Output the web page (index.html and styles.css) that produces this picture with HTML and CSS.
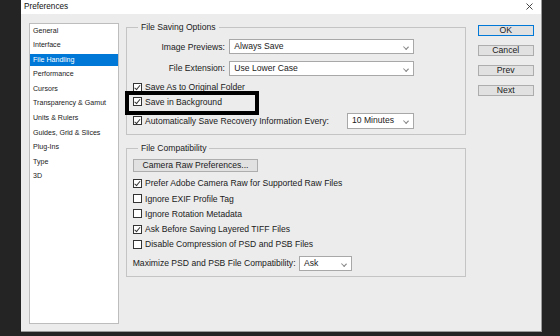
FILE: index.html
```html
<!DOCTYPE html>
<html lang="en">
<head>
  <meta charset="UTF-8" />
  <title>Preferences</title>
  <link rel="stylesheet" href="styles.css">
</head>
<body>
  <div class="dialog">
    <div class="titlebar">
      <span>Preferences</span>
      <svg class="close" width="7" height="7" viewBox="0 0 7 7"><path d="M0.5 0.5 L6.5 6.5 M6.5 0.5 L0.5 6.5" stroke="#333" stroke-width="0.9" fill="none"/></svg>
    </div>

    <div class="content">
      <ul class="nav">
        <li>General</li>
        <li>Interface</li>
        <li class="active">File Handling</li>
        <li>Performance</li>
        <li>Cursors</li>
        <li>Transparency &amp; Gamut</li>
        <li>Units &amp; Rulers</li>
        <li>Guides, Grid &amp; Slices</li>
        <li>Plug-Ins</li>
        <li>Type</li>
        <li>3D</li>
      </ul>

      <div class="panel">
        <fieldset class="group saving">
          <legend>File Saving Options</legend>
          <div class="field first">
            <label>Image Previews:</label>
            <div class="select wide">Always Save<span class="caret"></span></div>
          </div>
          <div class="field">
            <label>File Extension:</label>
            <div class="select wide">Use Lower Case<span class="caret"></span></div>
          </div>
          <div class="check first"><span class="box on"></span>Save As to Original Folder</div>
          <div class="check marked"><span class="box on"></span>Save in Background</div>
          <div class="check auto"><span class="box on"></span>Automatically Save Recovery Information Every:
            <div class="select mins">10 Minutes<span class="caret"></span></div>
          </div>
        </fieldset>

        <fieldset class="group compat">
          <legend>File Compatibility</legend>
          <button class="btn raw">Camera Raw Preferences...</button>
          <div class="check first"><span class="box on"></span>Prefer Adobe Camera Raw for Supported Raw Files</div>
          <div class="check"><span class="box"></span>Ignore EXIF Profile Tag</div>
          <div class="check"><span class="box"></span>Ignore Rotation Metadata</div>
          <div class="check"><span class="box on"></span>Ask Before Saving Layered TIFF Files</div>
          <div class="check"><span class="box"></span>Disable Compression of PSD and PSB Files</div>
          <div class="maximize">
            <label>Maximize PSD and PSB File Compatibility:</label>
            <div class="select ask">Ask<span class="caret"></span></div>
          </div>
        </fieldset>
      </div>

      <div class="actions">
        <button class="btn side default">OK</button>
        <button class="btn side">Cancel</button>
        <button class="btn side">Prev</button>
        <button class="btn side">Next</button>
      </div>
    </div>
  </div>
</body>
</html>
```

FILE: styles.css
```css
body {
  margin: 0;
  background-color: #242424;
  font-family: 'Liberation Sans', Arial, sans-serif;
  color: #1a1a1a;
  width: 560px;
  height: 336px;
  overflow: hidden;
}

.dialog {
  margin-left: 21px;
  width: 521px;
  height: 332px;
  box-sizing: border-box;
  background-color: #ececec;
  border-right: 1px solid #9a9a9a;
  border-bottom: 1px solid #9a9a9a;
}

.titlebar {
  height: 14px;
  background-color: #fff;
  display: flex;
  align-items: center;
  justify-content: space-between;
  padding: 0 8px 1px 3px;
  box-sizing: border-box;
  font-size: 8.2px;
  color: #111;
}

.content {
  display: flex;
  align-items: flex-start;
  padding: 9px 0 0 8px;
}

/* left category list */
.nav {
  list-style: none;
  margin: 0;
  padding: 0.8px 0 0;
  width: 90px;
  height: 301px;
  box-sizing: border-box;
  background-color: #fff;
  border: 1px solid #bdbdbd;
  font-size: 7.1px;
}

.nav li {
  height: 11.6px;
  line-height: 11.6px;
  padding-top: 0.8px;
  margin-bottom: 2.2px;
  padding-left: 3px;
  white-space: nowrap;
}

.nav li.active {
  background-color: #0078d7;
  color: #fff;
}

/* middle panel */
.panel {
  width: 340px;
  margin-left: 7px;
  font-size: 8.6px;
}

.group {
  margin: 0;
  padding: 0;
  min-width: 0;
  border: 1px solid #c4c4c4;
  box-sizing: border-box;
  width: 340px;
}

.group legend {
  margin-left: 11px;
  padding: 0 3px;
  height: 9px;
  line-height: 9px;
}

.saving {
  padding-bottom: 5.3px;
}

.compat {
  margin-top: 8.8px;
  padding-bottom: 5.3px;
}

.field {
  display: flex;
  align-items: center;
  height: 15.3px;
  margin-top: 6.4px;
}

.field.first {
  margin-top: 7px;
}

.field label {
  width: 98px;
  text-align: right;
  margin-right: 4.3px;
}

.select {
  position: relative;
  height: 15.3px;
  line-height: 13.3px;
  box-sizing: border-box;
  background-color: #fff;
  border: 1px solid #a8a8a8;
  padding-left: 4px;
}

.select.wide {
  width: 185px;
}

.select.mins {
  width: 67px;
  margin-left: auto;
  margin-right: 51px;
  height: 15.4px;
}

.select.ask {
  width: 53px;
}

.caret {
  position: absolute;
  right: 5px;
  top: 5px;
  width: 3px;
  height: 3px;
  border-right: 1px solid #8a8a8a;
  border-bottom: 1px solid #8a8a8a;
  transform: rotate(45deg) scaleX(1.1);
}

.check {
  display: flex;
  align-items: center;
  height: 15.3px;
  padding-left: 6px;
  white-space: nowrap;
}

.saving .check {
  height: 14.4px;
}

.saving .check.first {
  margin-top: 4.1px;
}

.saving .check.auto {
  height: 15.4px;
  margin-top: 4.4px;
}

.compat .check.first {
  margin-top: 4px;
}

.box {
  position: relative;
  flex: none;
  width: 9px;
  height: 9px;
  box-sizing: border-box;
  border: 1px solid #333;
  background-color: #fff;
  margin-right: 3px;
}

.box.on::after {
  content: "";
  position: absolute;
  left: 2.2px;
  top: 0.3px;
  width: 2.2px;
  height: 4.6px;
  border-right: 1px solid #333;
  border-bottom: 1px solid #333;
  transform: rotate(40deg);
}

/* black annotation frame round "Save in Background" */
.check.marked {
  position: relative;
}

.check.marked::after {
  content: "";
  position: absolute;
  left: -2px;
  top: -3.5px;
  width: 134px;
  height: 24px;
  box-sizing: border-box;
  border: 4px solid #000;
}

.btn {
  font-family: inherit;
  color: #1a1a1a;
  background-color: #e1e1e1;
  border: 1px solid #adadad;
  padding: 0;
  box-sizing: border-box;
}

.btn.raw {
  display: block;
  margin: 6.2px 0 0 6.3px;
  width: 124.4px;
  height: 12.7px;
  font-size: 8.6px;
  line-height: 10px;
}

.maximize {
  display: flex;
  align-items: center;
  height: 15.3px;
  margin-top: 3.5px;
  padding-left: 5.7px;
  white-space: nowrap;
}

.maximize label {
  width: 166.3px;
}

/* right column buttons */
.actions {
  display: flex;
  flex-direction: column;
  gap: 8.8px;
  margin: 2.3px 0 0 12px;
}

.btn.side {
  width: 55.5px;
  height: 11px;
  font-size: 8.7px;
  line-height: 9px;
}

.btn.default {
  border-color: #0078d7;
}
```
